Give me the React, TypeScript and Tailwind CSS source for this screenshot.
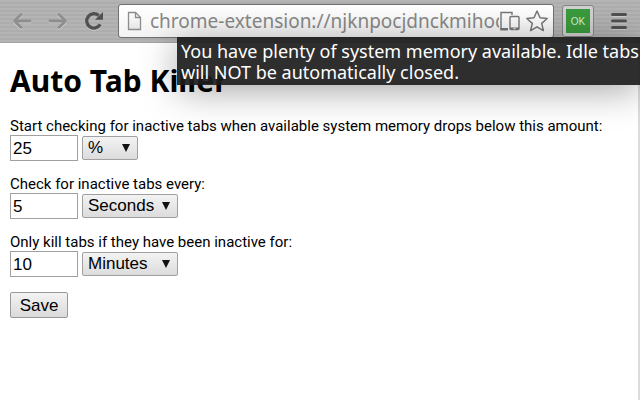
import { useState } from "react"

function BackIcon({ className = "" }: { className?: string }) {
    return (
        <svg viewBox="0 0 20 18" className={className} fill="none" strokeLinecap="round" strokeLinejoin="round">
            <path d="M18 10H3M9 3.5 2.5 10 9 16.5" stroke="#d2d2d2" strokeWidth="2.6" />
            <path d="M18 9H3M9 2.5 2.5 9 9 15.5" stroke="#8e8e8e" strokeWidth="2.8" />
        </svg>
    )
}

function ReloadIcon() {
    return (
        <svg viewBox="0 0 20 20" className="h-5 w-5" fill="none">
            <path d="M16.5 14.6A7.6 7.6 0 1 1 15 4.6" stroke="#cfcfcf" strokeWidth="3.2" />
            <path d="M16.2 13.4A7.2 7.2 0 1 1 14.8 4.6" stroke="#505050" strokeWidth="3.4" />
            <path d="M19 1v7.8h-8z" fill="#505050" />
        </svg>
    )
}

function PageIcon() {
    return (
        <svg viewBox="0 0 16 20" className="h-5 w-4 shrink-0">
            <defs>
                <linearGradient id="page" x1="0" y1="0" x2="0" y2="1">
                    <stop offset="0" stopColor="#fff" />
                    <stop offset="1" stopColor="#e4e4e4" />
                </linearGradient>
            </defs>
            <path d="M1.5 1.5h7l5 5v12h-12z" fill="url(#page)" stroke="#8c8c8c" strokeWidth="1.3" />
            <path d="M8.5 1.5v5h5" fill="none" stroke="#8c8c8c" strokeWidth="1.3" />
        </svg>
    )
}

function DevicesIcon() {
    return (
        <svg viewBox="0 0 22 20" className="h-5 w-[22px]" fill="none">
            <path d="M13 4V1.5H2V18h7" stroke="#777" strokeWidth="1.4" />
            <path d="M1.3 17H9v2.5H1.3z" fill="#777" />
            <rect x="11" y="5.5" width="9" height="13" rx="1" stroke="#777" strokeWidth="1.4" />
            <path d="M11 16.5h9V19h-9z" fill="#777" />
            <path d="M14.5 17.7h2" stroke="#fff" />
        </svg>
    )
}

function StarIcon() {
    return (
        <svg viewBox="0 0 24 24" className="h-6 w-6" fill="#fbfbfb">
            <path
                d="M12 2 15 8.8l7.2.7-5.5 4.9 1.7 7.2-6.4-3.8-6.4 3.8 1.7-7.2-5.5-4.9L9 8.8z"
                stroke="#777"
                strokeWidth="1.5"
                strokeLinejoin="round"
            />
        </svg>
    )
}

function MenuIcon() {
    return (
        <svg viewBox="0 0 18 18" className="h-[18px] w-[18px]" strokeLinecap="round">
            <path d="M2.5 3.5h13M2.5 10.2h13M2.5 16.5h13" stroke="#d4d4d4" strokeWidth="2.6" />
            <path d="M2.5 2.5h13M2.5 9h13M2.5 15.4h13" stroke="#505050" strokeWidth="3" />
        </svg>
    )
}

function Toolbar() {
    return (
        <header className="flex h-[43px] items-center border-b border-[#a3a3a3] bg-[repeating-linear-gradient(180deg,#b4b4b4_0px,#b4b4b4_2px,#adadad_2px,#adadad_4px)] px-3">
            <button type="button" aria-label="Back">
                <BackIcon className="h-[18px] w-5" />
            </button>
            <button type="button" aria-label="Forward" className="ml-4">
                <BackIcon className="h-[18px] w-5 -scale-x-100" />
            </button>
            <button type="button" aria-label="Reload" className="ml-4">
                <ReloadIcon />
            </button>
            <div className="ml-[14px] flex h-[34px] min-w-0 flex-1 items-center rounded-[3px] border border-[#707070] bg-linear-to-b from-white to-[#f3f3f3] pr-1 pl-2">
                <PageIcon />
                <input
                    type="text"
                    aria-label="Address"
                    readOnly
                    defaultValue="chrome-extension://njknpocjdnckmihocpkgjk/options.html"
                    className="ml-[7px] min-w-0 flex-1 font-['Noto_Sans',sans-serif] text-[19px] text-[#888] outline-none"
                />
                <div className="flex items-center gap-1">
                    <DevicesIcon />
                    <StarIcon />
                </div>
            </div>
            <button
                type="button"
                className="ml-2 flex h-8 w-8 shrink-0 items-center justify-center rounded-[3px] border border-[#858585] bg-[#d0d0d0]"
            >
                <span className="flex h-6 w-6 items-center justify-center bg-[#3a9a3c] font-['Liberation_Sans',sans-serif] text-[10px] text-[#d5ecd5]">
                    OK
                </span>
            </button>
            <button type="button" aria-label="Menu" className="ml-4">
                <MenuIcon />
            </button>
        </header>
    )
}

interface SettingProps {
    id: string
    label: string
    value: string
    unit: string
    units: string[]
    selectClass: string
}

function Setting({ id, label, value, unit, units, selectClass }: SettingProps) {
    const [amount, setAmount] = useState(value)
    const [current, setCurrent] = useState(unit)

    return (
        <div>
            <label htmlFor={id} className="block font-[Roboto,sans-serif] text-[15px] leading-[17px] whitespace-nowrap">
                {label}
            </label>
            <div className="flex items-center gap-1 font-['Liberation_Sans',sans-serif] text-[17px]">
                <input
                    id={id}
                    type="text"
                    value={amount}
                    onChange={(e) => setAmount(e.target.value)}
                    className="h-[26px] w-[68px] border border-[#a0a0a0] bg-white px-[2px] pt-[2px]"
                />
                <div className="grid items-center">
                    <select
                        aria-label={`${label} unit`}
                        value={current}
                        onChange={(e) => setCurrent(e.target.value)}
                        className={`col-start-1 row-start-1 h-6 appearance-none rounded-[2px] border border-[#a0a0a0] bg-linear-to-b from-[#f3f3f3] to-[#dcdcdc] pb-px pl-[5px] leading-5 ${selectClass}`}
                    >
                        {units.map((u) => (
                            <option key={u}>{u}</option>
                        ))}
                    </select>
                    <svg viewBox="0 0 8 8" className="pointer-events-none col-start-1 row-start-1 mr-2 h-2 w-2 justify-self-end">
                        <path d="M0 0h8L4 8z" fill="#111" />
                    </svg>
                </div>
            </div>
        </div>
    )
}

export default function App() {
    return (
        <div className="relative flex min-h-screen flex-col bg-white font-['Noto_Sans',sans-serif] text-black">
            <Toolbar />
            <main className="flex-1 border-r-2 border-[#dcdcdc] pt-5 pl-[10px]">
                <h1 className="text-[30px] leading-9 font-bold">Auto Tab Killer</h1>
                <form className="mt-[19px] flex flex-col gap-[15px]" onSubmit={(e) => e.preventDefault()}>
                    <Setting
                        id="memory"
                        label="Start checking for inactive tabs when available system memory drops below this amount:"
                        value="25"
                        unit="%"
                        units={["%", "MB"]}
                        selectClass="w-14"
                    />
                    <Setting
                        id="interval"
                        label="Check for inactive tabs every:"
                        value="5"
                        unit="Seconds"
                        units={["Seconds", "Minutes"]}
                        selectClass="w-24"
                    />
                    <Setting
                        id="inactive"
                        label="Only kill tabs if they have been inactive for:"
                        value="10"
                        unit="Minutes"
                        units={["Seconds", "Minutes"]}
                        selectClass="w-24"
                    />
                    <button
                        type="submit"
                        className="h-[26px] w-[58px] rounded-[2px] border border-[#999] bg-linear-to-b from-[#f3f3f3] to-[#dadada] font-['Liberation_Sans',sans-serif] text-[17px]"
                    >
                        Save
                    </button>
                </form>
            </main>
            {/* Status tooltip of the toolbar button */}
            <div
                role="tooltip"
                className="absolute top-[37px] right-0 w-[463px] bg-[#1c1c1c]/92 pt-1 pb-[2px] pl-1 text-lg leading-[21px] whitespace-nowrap text-white shadow-[0_6px_36px_rgba(0,0,0,0.35)]"
            >
                You have plenty of system memory available. Idle tabs
                <br />
                will NOT be automatically closed.
            </div>
        </div>
    )
}
